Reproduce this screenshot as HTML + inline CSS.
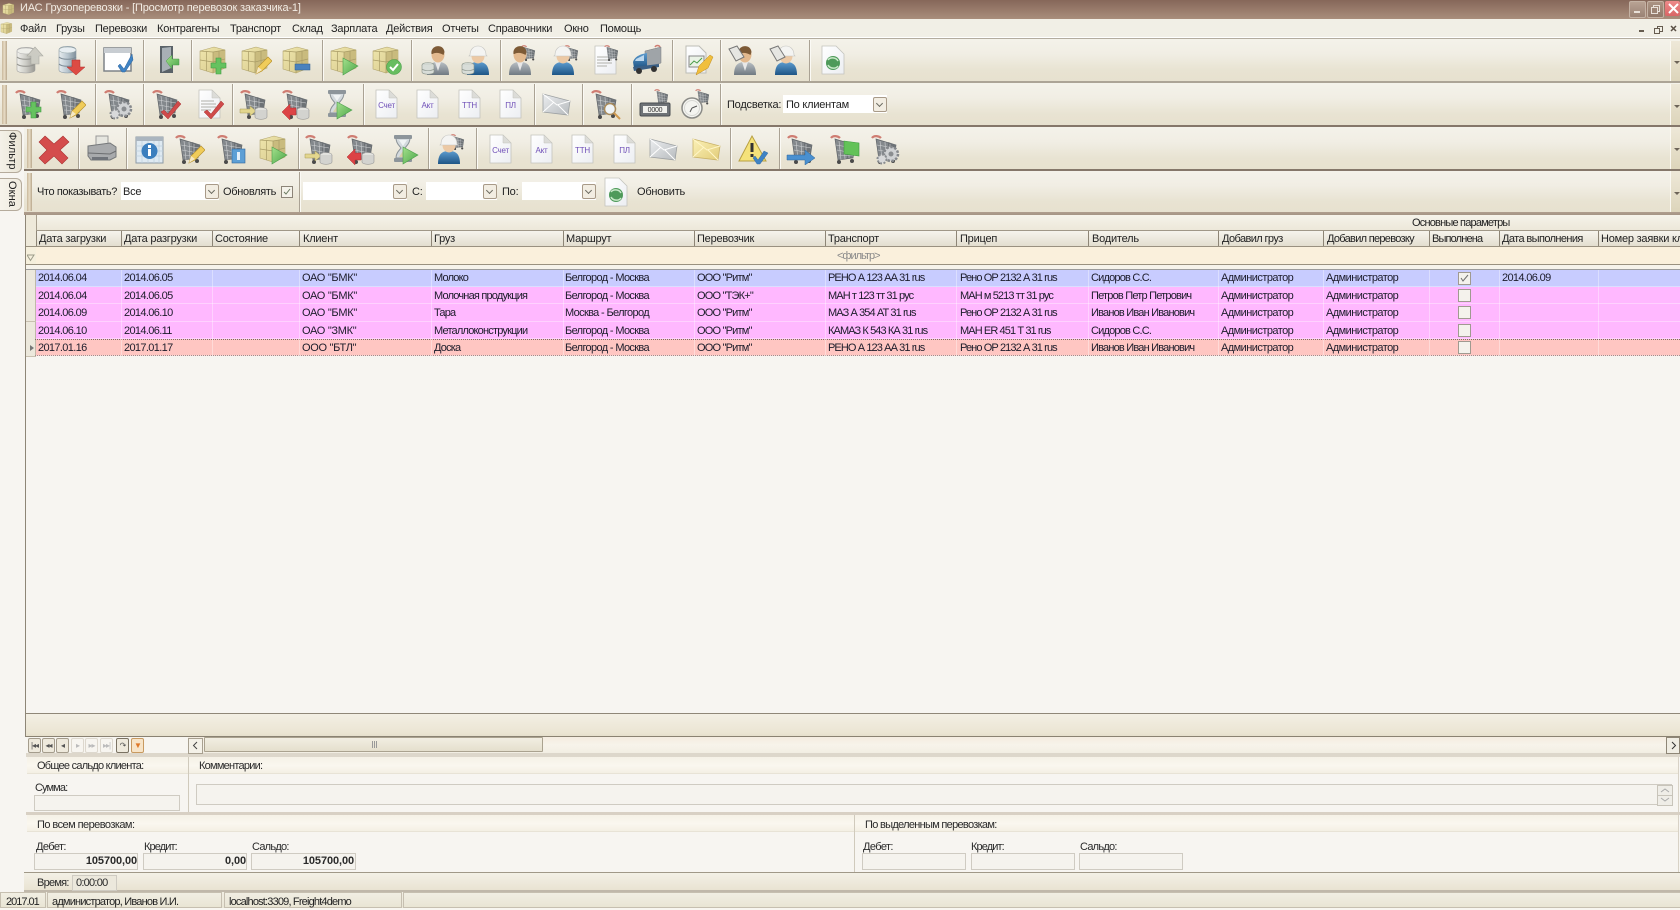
<!DOCTYPE html>
<html lang="ru"><head><meta charset="utf-8"><title>ИАС Грузоперевозки</title>
<style>
html,body{margin:0;padding:0;width:1680px;height:910px;overflow:hidden;background:#f7f5f1}
body{position:relative;font:11px "Liberation Sans","Noto Sans CJK SC",sans-serif;letter-spacing:-.22px;color:#222}
div,span,svg.i{position:absolute}
span{white-space:nowrap;line-height:14px;height:14px}
svg.i{width:32px;height:32px}
.a{top:44px}.b{top:88px}.c{top:133px}
.tb{left:0;width:1680px;background:linear-gradient(#f4f2ea,#f1eee4 35%,#e8e3d2 75%,#e7e1cf)}
.g{width:5px;left:2px;background:linear-gradient(90deg,#c9b89b,#e8dcc6 50%,#b8a78c);}
.s{width:1px;background:#aaa294;border-right:1px solid #fbfaf5}
.st{left:1670px;width:10px;border-left:1px solid #fbf9f2;background:linear-gradient(#eee8d8,#ddd5bb)}
.st:after{content:"";position:absolute;left:3px;top:50%;border:3px solid transparent;border-top:3px solid #6d6458}
.cb{background:#fff;height:18px}
.cb i{position:absolute;right:0;top:2px;width:12px;height:13px;background:#f2ede2;border:1px solid #a89a88;border-radius:2px}
.cb i:after{content:"";position:absolute;left:3px;top:3px;width:4px;height:4px;border:solid #6a6a60;border-width:0 1px 1px 0;transform:rotate(45deg)}
.h{top:231px;height:15px;background:linear-gradient(#f6f4ed,#e3decf);border-left:1px solid #8d8576}
.h span{top:1px}
.row{left:26px;width:1654px;height:17px;box-shadow:inset 0 -1px 0 rgba(255,255,255,.35)}
.row:before{content:"";position:absolute;left:0;top:0;width:9px;height:17px;background:#ece8dc;border-right:1px solid #c0b8a8;border-bottom:1px solid #c8c0b0}
.row span{top:1px;color:#1c1c2a}
.row+.row span{top:2px}
.c1{left:12px;letter-spacing:-.65px}.c2{left:98px;letter-spacing:-.65px}.c4{left:276px;letter-spacing:-.3px}.c5{left:408px;letter-spacing:-.8px}.c6{left:539px;letter-spacing:-.65px}.c7{left:671px;letter-spacing:-.8px}.c8{left:802px;letter-spacing:-.9px}.c9{left:934px;letter-spacing:-.9px}.c10{left:1065px;letter-spacing:-.8px}.c11{left:1195px;letter-spacing:-.55px}.c12{left:1300px;letter-spacing:-.55px}.c14{left:1476px;letter-spacing:-.65px}
.ck{left:1432px;top:2px;width:11px;height:11px;background:#f4f2ec;border:1px solid #a09a90}
.v{top:270px;height:86px;width:1px;background:rgba(255,255,255,.35)}
.f{background:#f5f3ee;border:1px solid #cfcbc2;box-sizing:border-box}
.hd{background:linear-gradient(#f5f1e6,#faf7ef 55%,#f4f0e4);}
.n{top:738px;width:11px;height:13px;background:#eee9dc;border:1px solid #a49c8c;border-radius:2px;color:#555;font-size:8px;line-height:13px;text-align:center;letter-spacing:-1px}
.n.o{background:#f7f5f0;border-color:#ddd8ce;color:#bbb}
.lb{letter-spacing:-.75px;color:#2a2a2a}
.bd{font-weight:bold;letter-spacing:-.1px;color:#2a2a2a}
.sb{top:892px;height:16px;background:linear-gradient(#f1eee3,#e9e5d4);border:1px solid #c6bfb0;box-sizing:border-box}
.sb span{top:2px;letter-spacing:-.8px}
.tab{left:0;width:21px;background:linear-gradient(90deg,#f4f1e8,#eae5d6);border:1px solid #b5ab9c;border-left:none;border-radius:0 6px 6px 0}
.vt{writing-mode:vertical-rl;line-height:16px;color:#222;letter-spacing:.1px}
</style></head><body>

<svg width="0" height="0" style="position:absolute"><defs>
<linearGradient id="gd" x1="0" x2="1" y1="0" y2="0"><stop offset="0" stop-color="#f2f2ef"/><stop offset=".5" stop-color="#c9c9c4"/><stop offset="1" stop-color="#8f8f8a"/></linearGradient>
<linearGradient id="gb" x1="0" x2="1" y1="0" y2="0"><stop offset="0" stop-color="#e8edf0"/><stop offset=".5" stop-color="#b9c6cf"/><stop offset="1" stop-color="#7f8f9b"/></linearGradient>
<linearGradient id="gt" x1="0" x2="1" y1="0" y2="1"><stop offset="0" stop-color="#efe6ad"/><stop offset="1" stop-color="#d6c88a"/></linearGradient>
<linearGradient id="gg" x1="0" x2="1" y1="0" y2="1"><stop offset="0" stop-color="#a4e08c"/><stop offset="1" stop-color="#4aa648"/></linearGradient>
<linearGradient id="gu" x1="0" x2="0" y1="0" y2="1"><stop offset="0" stop-color="#b9bfc4"/><stop offset="1" stop-color="#707a82"/></linearGradient>
<linearGradient id="gh" x1="0" x2="0" y1="0" y2="1"><stop offset="0" stop-color="#5d9ccf"/><stop offset="1" stop-color="#1e5586"/></linearGradient>
<linearGradient id="gp" x1="0" x2="1" y1="0" y2="1"><stop offset="0" stop-color="#ffffff"/><stop offset="1" stop-color="#eceef2"/></linearGradient>
<linearGradient id="gm" x1="0" x2="1" y1="0" y2="1"><stop offset="0" stop-color="#eceef0"/><stop offset="1" stop-color="#b6babd"/></linearGradient>
<linearGradient id="gy" x1="0" x2="1" y1="0" y2="1"><stop offset="0" stop-color="#fbf1b8"/><stop offset="1" stop-color="#e2cc78"/></linearGradient>

<symbol id="db" viewBox="0 0 32 32"><path d="M4 7c0-5 18-5 18 0v19c0 4-18 4-18 0z" fill="url(#gd)" stroke="#999" stroke-width=".6"/><path d="M4 13c3 3 15 3 18 0M4 20c3 3 15 3 18 0" fill="none" stroke="#8a8a86"/><ellipse cx="13" cy="7" rx="9" ry="3" fill="#eeeeea" stroke="#aaa" stroke-width=".5"/></symbol>
<symbol id="dbb" viewBox="0 0 32 32"><path d="M5 6c0-5 17-5 17 0v20c0 4-17 4-17 0z" fill="url(#gb)" stroke="#8a98a2" stroke-width=".6"/><path d="M5 13c3 3 14 3 17 0M5 20c3 3 14 3 17 0" fill="none" stroke="#7b8a95"/><ellipse cx="13.500" cy="6" rx="8.500" ry="3" fill="#e8eef2" stroke="#9aa" stroke-width=".5"/></symbol>
<symbol id="upa" viewBox="0 0 32 32"><path d="M22 3l8 9h-4v8h-8v-8h-4z" fill="#c8c8c0" stroke="#a5a59e" stroke-width=".6"/></symbol>
<symbol id="dna" viewBox="0 0 32 32"><path d="M18 16h8v7h5l-9 8-9-8h5z" fill="#dd4b44" stroke="#b02f2b" stroke-width=".5"/></symbol>
<symbol id="win" viewBox="0 0 32 32"><rect x="2" y="4" width="27" height="23" fill="#fff" stroke="#7e8388" stroke-width="1.500"/><rect x="2" y="4" width="27" height="5" fill="#c8cdd2"/><path d="M18 20l4 5 8-15 1 6-8 12h-3l-4-6z" fill="#3f83c4" stroke="#2a609a" stroke-width=".5"/></symbol>
<symbol id="door" viewBox="0 0 32 32"><path d="M8 2h13v27H8z" fill="#5a6268"/><path d="M10 4l9-1v21l-9 4z" fill="#a8b0b6"/><path d="M14 17l6-6v4h7v6h-7v4z" fill="url(#gg)" stroke="#4a9a4a" stroke-width=".5"/></symbol>
<symbol id="box" viewBox="0 0 32 32"><path d="M2 7l14-4 11 3v18l-12 5-13-4z" fill="url(#gt)" stroke="#b3a66f" stroke-width=".6"/><path d="M15 8l12-2v18l-12 5z" fill="#c9bb7e"/><path d="M2 7l13 1 12-2M2 16l13 2 12-3M8.500 7.500v19.500M15 8v21M21 7v20" stroke="#a99c66" stroke-width=".7" fill="none"/></symbol>
<symbol id="plus" viewBox="0 0 32 32"><path d="M18 14h5v5h5v5h-5v6h-5v-6h-5v-5h5z" fill="#66c25f" stroke="#3f9a42" stroke-width=".6"/></symbol>
<symbol id="pen" viewBox="0 0 32 32"><path d="M16 30l2-7 10-10 4 4-10 10z" fill="#f0cc5a" stroke="#b8922e" stroke-width=".7"/><path d="M16 30l2-7 4 3z" fill="#f5e8c4"/></symbol>
<symbol id="min" viewBox="0 0 32 32"><rect x="14" y="20" width="15" height="6" fill="#4a82bd" stroke="#2f5f90" stroke-width=".5"/></symbol>
<symbol id="play" viewBox="0 0 32 32"><path d="M14 14l15 8-15 9z" fill="url(#gg)" stroke="#4b9f4b" stroke-width=".6"/></symbol>
<symbol id="ok" viewBox="0 0 32 32"><circle cx="23" cy="23" r="7.500" fill="#67bd60" stroke="#3f9a42" stroke-width=".5"/><path d="M19 23l3 3 5-6" stroke="#fff" stroke-width="2" fill="none"/></symbol>
<symbol id="red" viewBox="0 0 32 32"><path d="M14 22l4 4 10-13 3 3-13 15-7-7z" fill="#cf4a4a" stroke="#a83232" stroke-width=".5"/></symbol>
<symbol id="u" viewBox="0 0 32 32"><path d="M6 31c0-11 5-13 11-13s11 2 11 13z" fill="url(#gu)"/><path d="M14 18l3 9 3-9z" fill="#e8e8e8"/><ellipse cx="17" cy="10.500" rx="6.500" ry="8" fill="#e3b98e"/><path d="M10.500 10c-1.500-9 12-11 13-2l-1 3c-3-2-8-3-11-1z" fill="#7d5a36"/></symbol>
<symbol id="uh" viewBox="0 0 32 32"><path d="M6 31c0-11 5-13 11-13s11 2 11 13z" fill="url(#gh)"/><ellipse cx="17" cy="12" rx="6.500" ry="7.500" fill="#ecc9a5"/><path d="M9 11c0-12 16-12 16 0l1 1H8z" fill="#f4f4f2" stroke="#c4c4c0" stroke-width=".6"/></symbol>
<symbol id="coin" viewBox="0 0 32 32"><ellipse cx="7" cy="21" rx="6" ry="2.500" fill="#d0d6d0" stroke="#8a938a" stroke-width=".6"/><path d="M1 21v7c0 3 12 3 12 0v-7" fill="#d8ddd8" stroke="#8a938a" stroke-width=".6"/><path d="M1 25c2 2 10 2 12 0" stroke="#8a938a" fill="none" stroke-width=".6"/></symbol>
<symbol id="cart" viewBox="0 0 32 32"><path d="M3 5c2-3 7-2 9 0" stroke="#cf7d72" stroke-width="2.200" fill="none"/><path d="M7 6l20 6-2 13-15 2z" fill="#83888c" stroke="#62666a" stroke-width=".7"/><path d="M19 9l8 3-2 13-6 1z" fill="#6d7276"/><path d="M11 8l2 19M16 9l1 17M21 11v14M8 12l18 3M9 17l16 3M10 22l15 1" stroke="#cfd1d3" stroke-width=".6" fill="none"/><circle cx="11" cy="29" r="2" fill="#4a4a4a"/><circle cx="24" cy="28" r="2" fill="#4a4a4a"/></symbol>
<symbol id="cartm" viewBox="0 0 32 32"><g transform="translate(14 0) scale(.55)"><use href="#cart" width="32" height="32"/></g></symbol>
<symbol id="gear" viewBox="0 0 32 32"><circle cx="22" cy="21" r="7" fill="#d0d2d4" stroke="#85888c" stroke-width="2.500" stroke-dasharray="2.500 1.500"/><circle cx="22" cy="21" r="2.500" fill="#8a8d90"/><circle cx="13" cy="26" r="4.500" fill="#d8d9da" stroke="#8a8d90" stroke-width="2" stroke-dasharray="2 1.500"/></symbol>
<symbol id="cdb" viewBox="0 0 32 32"><ellipse cx="23" cy="22" rx="6" ry="2.500" fill="#e2e2de" stroke="#888" stroke-width=".5"/><path d="M17 22v7c0 3 12 3 12 0v-7" fill="#d3d3cf" stroke="#888" stroke-width=".5"/></symbol>
<symbol id="cyl" viewBox="0 0 32 32"><path d="M2 21h10v-3l6 5-6 5v-3H2z" fill="#e3d68e" stroke="#a69a58" stroke-width=".5"/></symbol>
<symbol id="rarr" viewBox="0 0 32 32"><path d="M2 24l8-8v4h6v7h-6v5z" fill="#dc4345" stroke="#b02c2e" stroke-width=".5"/></symbol>
<symbol id="doc" viewBox="0 0 32 32"><path d="M6 2h13l8 8v20H6z" fill="url(#gp)" stroke="#c3c3bd" stroke-width=".8"/><path d="M19 2v8h8z" fill="#dcdcd8" stroke="#c3c3bd" stroke-width=".5"/></symbol>
<symbol id="lines" viewBox="0 0 32 32"><path d="M8 13h13M8 16h15M8 19h15M8 22h10" stroke="#b0b0aa"/></symbol>
<symbol id="glass" viewBox="0 0 32 32"><path d="M7 5h14c0 6-4 8-5 10 1 2 5 4 5 10H7c0-6 4-8 5-10-1-2-5-4-5-10z" fill="#d4dade" stroke="#8a9297"/><path d="M10 7h8l-4 6z" fill="#f0f3f4"/><path d="M14 18l4 6h-8z" fill="#d8cfa8"/><rect x="5" y="2" width="18" height="4" rx="1" fill="#8d959b"/><rect x="5" y="25" width="18" height="4" rx="1" fill="#8d959b"/></symbol>
<symbol id="mail" viewBox="0 0 32 32"><path d="M2 6l27 7-2 14L2 24z" fill="url(#gm)" stroke="#9ca0a2" stroke-width=".8"/><path d="M2 6l14 11 13-4M2 24l11-10M27 27L17 17" stroke="#fff" stroke-width="1" fill="none"/></symbol>
<symbol id="maily" viewBox="0 0 32 32"><path d="M3 6l27 7-2 14L3 24z" fill="url(#gy)" stroke="#c9b268" stroke-width=".8"/><path d="M3 6l14 11 13-4M3 24l11-10M28 27L18 17" stroke="#fff6c8" stroke-width="1" fill="none"/></symbol>
<symbol id="x" viewBox="0 0 32 32"><path d="M7 3l9 8 9-8 6 6-9 8 8 8-6 6-8-8-9 8-6-6 8-8-8-8z" fill="#d44c4c" stroke="#a93030" stroke-width=".6"/></symbol>
<symbol id="prn" viewBox="0 0 32 32"><path d="M11 3h12v10H11z" fill="#e6e6e0" stroke="#999"/><path d="M3 13l22-3 6 4v10l-6 3H6l-3-4z" fill="#a8aaac" stroke="#75787a"/><path d="M3 20l22 1 6-3" stroke="#6c6e70" fill="none"/><path d="M7 24h16v3H7z" fill="#70747a"/></symbol>
<symbol id="info" viewBox="0 0 32 32"><rect x="3" y="4" width="27" height="26" fill="#dfeaf2" stroke="#8d9aa5"/><rect x="3" y="4" width="27" height="4" fill="#aab5bf"/><path d="M3 13h27M3 18h27M3 23h27M9 8v22M15 8v22M21 8v22M26 8v22" stroke="#bdd0de" stroke-width=".7"/><circle cx="16.500" cy="18" r="8" fill="#3b7fbe"/><rect x="15" y="16" width="3" height="7" fill="#fff"/><rect x="15" y="12" width="3" height="3" fill="#fff"/></symbol>
<symbol id="warn" viewBox="0 0 32 32"><path d="M14 3l14 25H1z" fill="#f5e27a" stroke="#b8a042"/><rect x="12.500" y="10" width="3" height="9" fill="#333"/><rect x="12.500" y="21" width="3" height="3" fill="#333"/><path d="M17 23l3 4 6-9 4 2-8 11h-3l-4-6z" fill="#3f83c4" stroke="#295f95" stroke-width=".4"/></symbol>
<symbol id="blue" viewBox="0 0 32 32"><rect x="17" y="16" width="13" height="14" fill="#5d9fd5" stroke="#2f6599" stroke-width=".6"/><rect x="22" y="19" width="3" height="8" fill="#e5f0fa"/></symbol>
<symbol id="rep" viewBox="0 0 32 32"><path d="M4 2h13l7 7v20H4z" fill="url(#gp)" stroke="#bdbdb6"/><rect x="7" y="12" width="15" height="11" fill="#eaf2e6" stroke="#888"/><path d="M8 21l4-4 3 2 5-5" stroke="#4a9d4a" fill="none"/><path d="M14 31l3-9 11-11 3 2-5 11z" fill="#f0bf3e" stroke="#c08c22" stroke-width=".5"/></symbol>
<symbol id="truck" viewBox="0 0 32 32"><path d="M14 7l16-4v16l-16 5z" fill="#9fa4a8" stroke="#7a7e80" stroke-width=".5"/><path d="M24 3c1-2 4-2 5 0" stroke="#cf7d72" stroke-width="1.500" fill="none"/><path d="M2 18c2-6 8-8 14-9v15H3z" fill="url(#gh)"/><path d="M5 15l8-4v6H4z" fill="#bdd8ee"/><path d="M2 23l26-3v3L3 27z" fill="#3a5f85"/><circle cx="8" cy="27" r="3" fill="#333"/><circle cx="23" cy="25" r="3" fill="#333"/></symbol>
<symbol id="flag" viewBox="0 0 32 32"><path d="M16 8l15 2v13l-15-2z" fill="#63c258" stroke="#3f9a42" stroke-width=".6"/></symbol>
<symbol id="ar2" viewBox="0 0 32 32"><path d="M2 22h18v-5l10 8-10 7v-5H2z" fill="#4a90d0" stroke="#2f6599" stroke-width=".5"/></symbol>
<symbol id="cnt" viewBox="0 0 32 32"><rect x="1" y="15" width="30" height="13" rx="1.500" fill="#6e7276" stroke="#4a4e52"/><rect x="4" y="18" width="24" height="7" fill="#f0f0ec"/></symbol>
<symbol id="clk" viewBox="0 0 32 32"><circle cx="12" cy="20" r="10" fill="#f4f4f0" stroke="#8a8a86" stroke-width="1.500"/><circle cx="12" cy="20" r="7.500" fill="none" stroke="#d8d8d4"/><path d="M12 20l5-2M12 20l-2 4" stroke="#555"/></symbol>
<symbol id="mag" viewBox="0 0 32 32"><circle cx="21" cy="21" r="5.500" fill="#f0f4f6" stroke="#a88a5a" stroke-width="1.500"/><path d="M25 25l6 6" stroke="#d09a50" stroke-width="2"/></symbol>
<symbol id="grn" viewBox="0 0 32 32"><path d="M5 2h14l8 8v20H5z" fill="url(#gp)" stroke="#c3c3bd" stroke-width=".8"/><circle cx="16" cy="19" r="7" fill="#4e9a5a"/><path d="M11 16c2-3 8-3 10 1M21 22c-2 3-8 3-10-1" stroke="#c8e8c8" stroke-width="1.500" fill="none"/></symbol>
<symbol id="ud" viewBox="0 0 32 32"><path d="M1 5l8-3 7 11-8 4z" fill="#e6e6e2" stroke="#777"/></symbol>
</defs></svg>

<!-- title -->
<div style="left:0;top:0;width:1680px;height:19px;background:linear-gradient(#866759,#a98e7c)"></div>
<svg class="i" style="left:2px;top:2px;width:14px;height:14px" viewBox="0 0 32 32"><use href="#box"/></svg>
<span style="left:20px;top:1px;color:#f2ece4;font-size:11px;letter-spacing:-.17px">ИАС Грузоперевозки - [Просмотр перевозок заказчика-1]</span>
<div style="left:1629px;top:1px;width:15px;height:15px;background:linear-gradient(#b8a293,#9a8274);border:1px solid #c4b2a4;border-radius:2px"></div>
<div style="left:1634px;top:11px;width:6px;height:2px;background:#e8e0d8"></div>
<div style="left:1647px;top:1px;width:15px;height:15px;background:linear-gradient(#ab9484,#917869);border:1px solid #c4b2a4;border-radius:2px"></div>
<div style="left:1653px;top:5px;width:5px;height:5px;border:1px solid #e8e0d8"></div>
<div style="left:1651px;top:7px;width:5px;height:5px;border:1px solid #e8e0d8;background:#9c8475"></div>
<div style="left:1665px;top:1px;width:15px;height:15px;background:linear-gradient(#ee8a8a,#d96565);border-radius:2px"></div>
<svg style="position:absolute;left:1668px;top:3px" width="12" height="12"><path d="M1 1l9 9M10 1l-9 9" stroke="#fff" stroke-width="2"/></svg>

<!-- menu -->
<div style="left:0;top:19px;width:1680px;height:18px;background:#f1efe6"></div>
<div style="left:0;top:37px;width:1680px;height:2px;background:#fff"></div>
<div style="left:0;top:38px;width:1680px;height:1px;background:#b3ac9f"></div>
<svg class="i" style="left:0;top:21px;width:14px;height:14px" viewBox="0 0 32 32"><use href="#box"/></svg>
<span style="left:20px;top:22px">Файл</span><span style="left:56px;top:22px">Грузы</span><span style="left:95px;top:22px">Перевозки</span><span style="left:157px;top:22px">Контрагенты</span><span style="left:230px;top:22px">Транспорт</span><span style="left:292px;top:22px">Склад</span><span style="left:331px;top:22px">Зарплата</span><span style="left:386px;top:22px">Действия</span><span style="left:442px;top:22px">Отчеты</span><span style="left:488px;top:22px">Справочники</span><span style="left:564px;top:22px">Окно</span><span style="left:600px;top:22px">Помощь</span>
<div style="left:1639px;top:30px;width:5px;height:2px;background:#665c50"></div>
<div style="left:1657px;top:26px;width:4px;height:4px;border:1px solid #665c50"></div><div style="left:1654px;top:28px;width:4px;height:4px;border:1px solid #665c50;background:#f1efe6"></div>
<svg style="position:absolute;left:1670px;top:25px" width="8" height="8"><path d="M1 1l5 5M6 1L1 6" stroke="#5a5046" stroke-width="1.500"/></svg>

<!-- toolbars -->
<div class="tb" style="top:39px;height:42px"></div>
<div style="left:0;top:81px;width:1680px;height:2px;background:#aca496"></div>
<div class="tb" style="top:83px;height:42px"></div>
<div style="left:0;top:125px;width:1680px;height:2px;background:#85776a"></div>
<div class="tb" style="left:24px;width:1656px;top:127px;height:42px"></div>
<div style="left:24px;top:169px;width:1656px;height:2px;background:#85776a"></div>
<div class="tb" style="left:24px;width:1656px;top:171px;height:41px"></div>
<div style="left:24px;top:212px;width:1656px;height:3px;background:linear-gradient(#b09e8e,#a59484)"></div>
<div class="g" style="top:41px;height:39px"></div><div class="g" style="top:85px;height:39px"></div>
<div class="g" style="left:27px;top:129px;height:39px"></div><div class="g" style="left:27px;top:173px;height:38px"></div>
<div class="st" style="top:41px;height:40px"></div><div class="st" style="top:84px;height:41px"></div><div class="st" style="top:127px;height:42px"></div><div class="st" style="top:171px;height:41px"></div>

<!-- seps T1 -->
<div class="s" style="left:95px;top:40px;height:41px"></div><div class="s" style="left:143px;top:40px;height:41px"></div><div class="s" style="left:191px;top:40px;height:41px"></div><div class="s" style="left:322px;top:40px;height:41px"></div><div class="s" style="left:411px;top:40px;height:41px"></div><div class="s" style="left:500px;top:40px;height:41px"></div><div class="s" style="left:672px;top:40px;height:41px"></div><div class="s" style="left:720px;top:40px;height:41px"></div><div class="s" style="left:809px;top:40px;height:41px"></div>
<!-- seps T2 -->
<div class="s" style="left:95px;top:84px;height:41px"></div><div class="s" style="left:143px;top:84px;height:41px"></div><div class="s" style="left:232px;top:84px;height:41px"></div><div class="s" style="left:363px;top:84px;height:41px"></div><div class="s" style="left:534px;top:84px;height:41px"></div><div class="s" style="left:582px;top:84px;height:41px"></div><div class="s" style="left:631px;top:84px;height:41px"></div><div class="s" style="left:720px;top:84px;height:41px"></div>
<!-- seps T3 -->
<div class="s" style="left:78px;top:128px;height:41px"></div><div class="s" style="left:126px;top:128px;height:41px"></div><div class="s" style="left:298px;top:128px;height:41px"></div><div class="s" style="left:428px;top:128px;height:41px"></div><div class="s" style="left:476px;top:128px;height:41px"></div><div class="s" style="left:730px;top:128px;height:41px"></div><div class="s" style="left:779px;top:128px;height:41px"></div>
<div class="s" style="left:299px;top:172px;height:40px"></div>

<!-- T1 icons -->
<svg class="i a" style="left:13px" viewBox="0 0 32 32" opacity=".9"><use href="#db"/><use href="#upa"/></svg>
<svg class="i a" style="left:54px" viewBox="0 0 32 32"><use href="#dbb"/><use href="#dna"/></svg>
<svg class="i a" style="left:102px" viewBox="0 0 32 32"><use href="#win"/></svg>
<svg class="i a" style="left:152px" viewBox="0 0 32 32"><use href="#door"/></svg>
<svg class="i a" style="left:198px" viewBox="0 0 32 32"><use href="#box"/><use href="#plus"/></svg>
<svg class="i a" style="left:240px" viewBox="0 0 32 32"><use href="#box"/><use href="#pen"/></svg>
<svg class="i a" style="left:281px" viewBox="0 0 32 32"><use href="#box"/><use href="#min"/></svg>
<svg class="i a" style="left:329px" viewBox="0 0 32 32"><use href="#box"/><use href="#play"/></svg>
<svg class="i a" style="left:371px" viewBox="0 0 32 32"><use href="#box"/><use href="#ok"/></svg>
<svg class="i a" style="left:421px" viewBox="0 0 32 32"><use href="#u"/><use href="#coin"/></svg>
<svg class="i a" style="left:461px" viewBox="0 0 32 32"><use href="#uh"/><use href="#coin"/></svg>
<svg class="i a" style="left:506px" viewBox="0 0 32 32"><use href="#cartm"/><g transform="translate(-3 0)"><use href="#u"/></g></svg>
<svg class="i a" style="left:549px" viewBox="0 0 32 32"><use href="#cartm"/><g transform="translate(-3 0)"><use href="#uh"/></g></svg>
<svg class="i a" style="left:589px" viewBox="0 0 32 32"><use href="#doc"/><use href="#lines"/><use href="#cartm"/></svg>
<svg class="i a" style="left:631px" viewBox="0 0 32 32"><use href="#truck"/></svg>
<svg class="i a" style="left:682px" viewBox="0 0 32 32"><use href="#rep"/></svg>
<svg class="i a" style="left:728px" viewBox="0 0 32 32"><use href="#u"/><use href="#ud"/></svg>
<svg class="i a" style="left:769px" viewBox="0 0 32 32"><use href="#uh"/><use href="#ud"/></svg>
<svg class="i a" style="left:817px" viewBox="0 0 32 32"><use href="#grn"/></svg>

<!-- T2 icons -->
<svg class="i b" style="left:13px" viewBox="0 0 32 32"><use href="#cart"/><use href="#plus"/></svg>
<svg class="i b" style="left:54px" viewBox="0 0 32 32"><use href="#cart"/><use href="#pen"/></svg>
<svg class="i b" style="left:102px" viewBox="0 0 32 32"><use href="#cart"/><use href="#gear"/></svg>
<svg class="i b" style="left:150px" viewBox="0 0 32 32"><use href="#cart"/><use href="#red"/></svg>
<svg class="i b" style="left:193px" viewBox="0 0 32 32"><use href="#doc"/><use href="#lines"/><use href="#red"/></svg>
<svg class="i b" style="left:238px" viewBox="0 0 32 32"><use href="#cart"/><use href="#cyl"/><use href="#cdb"/></svg>
<svg class="i b" style="left:280px" viewBox="0 0 32 32"><use href="#cart"/><use href="#rarr"/><use href="#cdb"/></svg>
<svg class="i b" style="left:323px" viewBox="0 0 32 32"><use href="#glass"/><use href="#play"/></svg>
<svg class="i b" style="left:370px" viewBox="0 0 32 32"><use href="#doc"/><text x="16.500" y="20" font-size="8" text-anchor="middle" fill="#7050b8" font-family="Liberation Sans">Счет</text></svg>
<svg class="i b" style="left:411px" viewBox="0 0 32 32"><use href="#doc"/><text x="16.500" y="20" font-size="8" text-anchor="middle" fill="#7050b8" font-family="Liberation Sans">Акт</text></svg>
<svg class="i b" style="left:453px" viewBox="0 0 32 32"><use href="#doc"/><text x="16.500" y="20" font-size="8" text-anchor="middle" fill="#7050b8" font-family="Liberation Sans">ТТН</text></svg>
<svg class="i b" style="left:494px" viewBox="0 0 32 32"><use href="#doc"/><text x="16.500" y="20" font-size="8" text-anchor="middle" fill="#7050b8" font-family="Liberation Sans">ПЛ</text></svg>
<svg class="i b" style="left:541px" viewBox="0 0 32 32"><use href="#mail"/></svg>
<svg class="i b" style="left:589px" viewBox="0 0 32 32"><use href="#cart"/><use href="#mag"/></svg>
<svg class="i b" style="left:639px" viewBox="0 0 32 32"><use href="#cartm"/><use href="#cnt"/><text x="16" y="24" font-size="7" text-anchor="middle" fill="#333" font-family="Liberation Sans">0000</text></svg>
<svg class="i b" style="left:680px" viewBox="0 0 32 32"><use href="#cartm"/><use href="#clk"/></svg>
<span style="left:727px;top:98px">Подсветка:</span>
<div class="cb" style="left:783px;top:95px;width:104px"><i></i></div><span style="left:786px;top:98px">По клиентам</span>

<!-- T3 icons -->
<svg class="i c" style="left:38px" viewBox="0 0 32 32"><use href="#x"/></svg>
<svg class="i c" style="left:85px" viewBox="0 0 32 32"><use href="#prn"/></svg>
<svg class="i c" style="left:133px" viewBox="0 0 32 32"><use href="#info"/></svg>
<svg class="i c" style="left:173px" viewBox="0 0 32 32"><use href="#cart"/><use href="#pen"/></svg>
<svg class="i c" style="left:215px" viewBox="0 0 32 32"><use href="#cart"/><use href="#blue"/></svg>
<svg class="i c" style="left:258px" viewBox="0 0 32 32"><use href="#box"/><use href="#play"/></svg>
<svg class="i c" style="left:303px" viewBox="0 0 32 32"><use href="#cart"/><use href="#cyl"/><use href="#cdb"/></svg>
<svg class="i c" style="left:345px" viewBox="0 0 32 32"><use href="#cart"/><use href="#rarr"/><use href="#cdb"/></svg>
<svg class="i c" style="left:389px" viewBox="0 0 32 32"><use href="#glass"/><use href="#play"/></svg>
<svg class="i c" style="left:435px" viewBox="0 0 32 32"><use href="#cartm"/><g transform="translate(-3 0)"><use href="#uh"/></g></svg>
<svg class="i c" style="left:484px" viewBox="0 0 32 32"><use href="#doc"/><text x="16.500" y="20" font-size="8" text-anchor="middle" fill="#7050b8" font-family="Liberation Sans">Счет</text></svg>
<svg class="i c" style="left:525px" viewBox="0 0 32 32"><use href="#doc"/><text x="16.500" y="20" font-size="8" text-anchor="middle" fill="#7050b8" font-family="Liberation Sans">Акт</text></svg>
<svg class="i c" style="left:566px" viewBox="0 0 32 32"><use href="#doc"/><text x="16.500" y="20" font-size="8" text-anchor="middle" fill="#7050b8" font-family="Liberation Sans">ТТН</text></svg>
<svg class="i c" style="left:608px" viewBox="0 0 32 32"><use href="#doc"/><text x="16.500" y="20" font-size="8" text-anchor="middle" fill="#7050b8" font-family="Liberation Sans">ПЛ</text></svg>
<svg class="i c" style="left:648px" viewBox="0 0 32 32"><use href="#mail"/></svg>
<svg class="i c" style="left:690px" viewBox="0 0 32 32"><use href="#maily"/></svg>
<svg class="i c" style="left:738px" viewBox="0 0 32 32"><use href="#warn"/></svg>
<svg class="i c" style="left:785px" viewBox="0 0 32 32"><use href="#cart"/><use href="#ar2"/></svg>
<svg class="i c" style="left:828px" viewBox="0 0 32 32"><use href="#cart"/><use href="#flag"/></svg>
<svg class="i c" style="left:869px" viewBox="0 0 32 32"><use href="#cart"/><use href="#gear"/></svg>

<!-- T4 -->
<span style="left:37px;top:185px;letter-spacing:-.4px">Что показывать?</span>
<div class="cb" style="left:121px;top:182px;width:98px"><i></i></div><span style="left:123px;top:185px">Все</span>
<span style="left:223px;top:185px;letter-spacing:-.3px">Обновлять</span>
<div style="left:281px;top:186px;width:10px;height:10px;border:1px solid #8c8478;background:#f4f2ea"></div>
<svg style="position:absolute;left:282px;top:187px" width="10" height="10"><path d="M2 5l2 2 4-5" stroke="#6a7a60" fill="none"/></svg>
<div class="cb" style="left:303px;top:182px;width:104px"><i></i></div>
<span style="left:412px;top:185px">С:</span>
<div class="cb" style="left:426px;top:182px;width:71px"><i></i></div>
<span style="left:502px;top:185px">По:</span>
<div class="cb" style="left:522px;top:182px;width:74px"><i></i></div>
<svg class="i" style="left:600px;top:176px" viewBox="0 0 32 32"><use href="#grn"/></svg>
<span style="left:637px;top:185px">Обновить</span>

<!-- left tabs -->
<div class="tab" style="top:130px;height:41px"></div>
<div class="tab" style="top:178px;height:31px;background:linear-gradient(90deg,#f6f3eb,#f0ebdf)"></div>
<span class="vt" style="left:4px;top:132px;width:16px;height:38px">Фильтр</span>
<span class="vt" style="left:4px;top:181px;width:16px;height:26px">Окна</span>

<!-- grid -->
<div style="left:25px;top:215px;width:1px;height:522px;background:#8e8677"></div>
<div style="left:26px;top:215px;width:1654px;height:16px;background:linear-gradient(#f6f3ea,#ece7d8)"></div>
<div style="left:26px;top:215px;width:10px;height:53px;background:#eee9da;border-right:1px solid #a89f8e"></div>
<span style="left:1412px;top:216px;letter-spacing:-.8px">Основные параметры</span>
<div style="left:36px;top:230px;width:1644px;height:1px;background:#a09888"></div>
<div class="h" style="left:36px;width:85px"><span style="left:2px">Дата загрузки</span></div>
<div class="h" style="left:121px;width:91px"><span style="left:2px">Дата разгрузки</span></div>
<div class="h" style="left:212px;width:87px"><span style="left:2px">Состояние</span></div>
<div class="h" style="left:299px;width:132px"><span style="left:3px">Клиент</span></div>
<div class="h" style="left:431px;width:132px"><span style="left:2px">Груз</span></div>
<div class="h" style="left:563px;width:131px"><span style="left:2px">Маршрут</span></div>
<div class="h" style="left:694px;width:131px"><span style="left:2px">Перевозчик</span></div>
<div class="h" style="left:825px;width:131px"><span style="left:2px">Транспорт</span></div>
<div class="h" style="left:956px;width:132px"><span style="left:3px">Прицеп</span></div>
<div class="h" style="left:1088px;width:130px"><span style="left:3px">Водитель</span></div>
<div class="h" style="left:1218px;width:105px"><span style="left:3px;letter-spacing:-.6px">Добавил груз</span></div>
<div class="h" style="left:1323px;width:106px"><span style="left:3px;letter-spacing:-.7px">Добавил перевозку</span></div>
<div class="h" style="left:1429px;width:70px"><span style="left:2px;letter-spacing:-.85px">Выполнена</span></div>
<div class="h" style="left:1499px;width:99px"><span style="left:2px;letter-spacing:-.6px">Дата выполнения</span></div>
<div class="h" style="left:1598px;width:82px;overflow:hidden"><span style="left:2px">Номер заявки кл</span></div>
<div style="left:26px;top:246px;width:1654px;height:1px;background:#9a9180"></div>
<div style="left:36px;top:247px;width:1644px;height:17px;background:#faf0dc"></div>
<div style="left:26px;top:247px;width:10px;height:17px;background:#f5efdc"></div>
<svg style="position:absolute;left:27px;top:254px" width="8" height="8"><path d="M0 1h7L3.500 6.500z" fill="none" stroke="#9a9a88"/></svg>
<span style="left:837px;top:249px;color:#8a8a8a;letter-spacing:-1px">&lt;фильтр&gt;</span>
<div style="left:26px;top:264px;width:1654px;height:1px;background:#9a9180"></div>
<div style="left:26px;top:265px;width:1654px;height:4px;background:#f6f3eb"></div>
<div style="left:26px;top:269px;width:1654px;height:1px;background:#9c9c9c"></div>

<div class="row" style="top:270px;background:#c8ccff"><span class="c1">2014.06.04</span><span class="c2">2014.06.05</span><span class="c4">ОАО "БМК"</span><span class="c5">Молоко</span><span class="c6">Белгород - Москва</span><span class="c7">ООО "Ритм"</span><span class="c8">РЕНО А 123 АА 31 rus</span><span class="c9">Рено ОР 2132 А 31 rus</span><span class="c10">Сидоров С.С.</span><span class="c11">Администратор</span><span class="c12">Администратор</span><i class="ck" style="position:absolute"></i><svg style="position:absolute;left:1433px;top:3px" width="11" height="11"><path d="M2 5l2 3 5-6" stroke="#707070" fill="none"/></svg><span class="c14">2014.06.09</span></div>
<div class="row" style="top:287px;background:#ffb8ff"><span class="c1">2014.06.04</span><span class="c2">2014.06.05</span><span class="c4">ОАО "БМК"</span><span class="c5">Молочная продукция</span><span class="c6">Белгород - Москва</span><span class="c7">ООО "ТЭК+"</span><span class="c8">МАН т 123 тт 31 рус</span><span class="c9">МАН м 5213 тт 31 рус</span><span class="c10">Петров Петр Петрович</span><span class="c11">Администратор</span><span class="c12">Администратор</span><i class="ck" style="position:absolute"></i></div>
<div class="row" style="top:304px;height:18px;background:#ffb8ff"><span class="c1">2014.06.09</span><span class="c2">2014.06.10</span><span class="c4">ОАО "БМК"</span><span class="c5">Тара</span><span class="c6">Москва - Белгород</span><span class="c7">ООО "Ритм"</span><span class="c8">МАЗ А 354 АТ 31 rus</span><span class="c9">Рено ОР 2132 А 31 rus</span><span class="c10">Иванов Иван Иванович</span><span class="c11">Администратор</span><span class="c12">Администратор</span><i class="ck" style="position:absolute"></i></div>
<div class="row" style="top:322px;background:#ffb8ff"><span class="c1">2014.06.10</span><span class="c2">2014.06.11</span><span class="c4">ОАО "ЗМК"</span><span class="c5">Металлоконструкции</span><span class="c6">Белгород - Москва</span><span class="c7">ООО "Ритм"</span><span class="c8">КАМАЗ К 543 КА 31 rus</span><span class="c9">МАН ER 451 Т 31 rus</span><span class="c10">Сидоров С.С.</span><span class="c11">Администратор</span><span class="c12">Администратор</span><i class="ck" style="position:absolute"></i></div>
<div class="row" style="top:339px;background:#ffc6c2"><span class="c1">2017.01.16</span><span class="c2">2017.01.17</span><span class="c4">ООО "БТЛ"</span><span class="c5">Доска</span><span class="c6">Белгород - Москва</span><span class="c7">ООО "Ритм"</span><span class="c8">РЕНО А 123 АА 31 rus</span><span class="c9">Рено ОР 2132 А 31 rus</span><span class="c10">Иванов Иван Иванович</span><span class="c11">Администратор</span><span class="c12">Администратор</span><i class="ck" style="position:absolute"></i></div>
<div style="left:35px;top:339px;width:1645px;height:0;border-top:1px dotted #7a6a6a"></div>
<div style="left:35px;top:355px;width:1645px;height:0;border-top:1px dotted #a08f8f"></div>
<svg style="position:absolute;left:29px;top:344px" width="6" height="8"><path d="M1 1l4 3-4 3z" fill="#777"/></svg>
<div class="v" style="left:121px"></div><div class="v" style="left:212px"></div><div class="v" style="left:299px"></div><div class="v" style="left:431px"></div><div class="v" style="left:563px"></div><div class="v" style="left:694px"></div><div class="v" style="left:825px"></div><div class="v" style="left:956px"></div><div class="v" style="left:1088px"></div><div class="v" style="left:1218px"></div><div class="v" style="left:1323px"></div><div class="v" style="left:1429px"></div><div class="v" style="left:1499px"></div><div class="v" style="left:1598px"></div>

<!-- grid footer -->
<div style="left:26px;top:713px;width:1654px;height:1px;background:#8f8778"></div>
<div style="left:26px;top:714px;width:1654px;height:22px;background:linear-gradient(#f3efe4,#ebe5d3 85%,#e6dfcc)"></div>
<div style="left:26px;top:736px;width:1654px;height:1px;background:#8a8272"></div>
<div style="left:26px;top:737px;width:1654px;height:16px;background:linear-gradient(#f4ece0,#f7f3ea 50%,#f2eee3)"></div>
<div style="left:26px;top:737px;width:162px;height:16px;background:#f7f5f0"></div>
<div style="left:26px;top:753px;width:1654px;height:4px;background:#ddd7cb"></div>
<div class="n" style="left:28px">|◂◂</div><div class="n" style="left:42px">◂◂</div><div class="n" style="left:56px">◂</div><div class="n o" style="left:71px">▸</div><div class="n o" style="left:85px">▸▸</div><div class="n o" style="left:100px">▸▸|</div><div class="n" style="left:116px;border-color:#7a7262">↷</div><div class="n" style="left:131px;background:#f7e4c8;border-color:#c89a60;color:#e07828">▼</div>
<div style="left:188px;top:738px;width:13px;height:14px;background:#f4f1e8;border:1px solid #a8a090"></div>
<svg style="position:absolute;left:192px;top:741px" width="7" height="9"><path d="M5 1L1.500 4.500 5 8" fill="none" stroke="#444"/></svg>
<div style="left:204px;top:737px;width:339px;height:15px;background:linear-gradient(#f2eee2,#e5dfcd);border:1px solid #aaa28f;box-sizing:border-box;border-radius:1px"></div>
<div style="left:372px;top:741px;width:1px;height:7px;background:#999;box-shadow:2px 0 0 #999,4px 0 0 #999"></div>
<div style="left:1666px;top:737px;width:12px;height:15px;background:#f0ede3;border:1px solid #8e8676"></div>
<svg style="position:absolute;left:1670px;top:741px" width="7" height="9"><path d="M2 1l3.500 3.500L2 8" fill="none" stroke="#333"/></svg>

<!-- panel 1 -->
<div style="left:27px;top:757px;width:1651px;height:55px;background:#f7f5f1;border-right:1px solid #d8d2c6"></div>
<div class="hd" style="left:27px;top:757px;width:161px;height:16px;border-bottom:1px solid #e8e3d6"></div>
<div class="hd" style="left:189px;top:757px;width:1489px;height:16px;border-bottom:1px solid #e8e3d6"></div>
<div style="left:188px;top:757px;width:1px;height:55px;background:#d0cabc"></div>
<span class="lb" style="left:37px;top:759px">Общее сальдо клиента:</span>
<span class="lb" style="left:199px;top:759px">Комментарии:</span>
<span class="lb" style="left:35px;top:781px;letter-spacing:-.9px">Сумма:</span>
<div class="f" style="left:34px;top:795px;width:146px;height:16px"></div>
<div class="f" style="left:196px;top:784px;width:1476px;height:21px"></div>
<div style="left:1657px;top:785px;width:14px;height:9px;background:#efede7;border:1px solid #c8c4ba"></div><div style="left:1657px;top:795px;width:14px;height:9px;background:#efede7;border:1px solid #c8c4ba"></div>
<svg style="position:absolute;left:1660px;top:787px" width="10" height="18"><path d="M1 5l4-3 4 3M1 11l4 3 4-3" fill="none" stroke="#aaa"/></svg>
<div style="left:26px;top:812px;width:1654px;height:3px;background:#d8d0c4"></div>

<!-- panel 2 -->
<div style="left:27px;top:815px;width:1651px;height:57px;background:#f7f5f1;border-right:1px solid #d8d2c6"></div>
<div class="hd" style="left:27px;top:815px;width:827px;height:16px;border-bottom:1px solid #e8e3d6"></div>
<div class="hd" style="left:855px;top:815px;width:823px;height:16px;border-bottom:1px solid #e8e3d6"></div>
<div style="left:854px;top:815px;width:1px;height:57px;background:#d0cabc"></div>
<span class="lb" style="left:37px;top:818px;letter-spacing:-.55px">По всем перевозкам:</span>
<span class="lb" style="left:865px;top:818px;letter-spacing:-.7px">По выделенным перевозкам:</span>
<span class="lb" style="left:36px;top:840px;letter-spacing:-.6px">Дебет:</span><span class="lb" style="left:144px;top:840px;letter-spacing:-.9px">Кредит:</span><span class="lb" style="left:252px;top:840px">Сальдо:</span>
<span class="lb" style="left:863px;top:840px;letter-spacing:-.6px">Дебет:</span><span class="lb" style="left:971px;top:840px;letter-spacing:-.9px">Кредит:</span><span class="lb" style="left:1080px;top:840px">Сальдо:</span>
<div class="f" style="left:34px;top:853px;width:104px;height:17px"></div><div class="f" style="left:143px;top:853px;width:104px;height:17px"></div><div class="f" style="left:251px;top:853px;width:105px;height:17px"></div>
<span class="bd" style="right:1543px;top:854px">105700,00</span><span class="bd" style="right:1434px;top:854px">0,00</span><span class="bd" style="right:1326px;top:854px">105700,00</span>
<div class="f" style="left:862px;top:853px;width:104px;height:17px"></div><div class="f" style="left:971px;top:853px;width:104px;height:17px"></div><div class="f" style="left:1079px;top:853px;width:104px;height:17px"></div>

<!-- time -->
<div style="left:24px;top:872px;width:1656px;height:1px;background:#a09888"></div>
<div style="left:24px;top:873px;width:1656px;height:17px;background:linear-gradient(#f3f0e6,#e9e3d2)"></div>
<div style="left:24px;top:890px;width:1656px;height:2px;background:#c0b8aa"></div>
<span class="lb" style="left:37px;top:876px">Время:</span>
<div class="f" style="left:72px;top:875px;width:45px;height:16px;background:#ece8dc"></div><span class="lb" style="left:76px;top:876px">0:00:00</span>

<!-- status -->
<div style="left:0;top:892px;width:1680px;height:17px;background:linear-gradient(#f1eee3,#e9e5d4)"></div>
<div style="left:0;top:908px;width:1680px;height:2px;background:#f8f6f0"></div>
<div class="sb" style="left:0;width:46px"><span style="left:5px;letter-spacing:-1px">2017.01</span></div>
<div class="sb" style="left:47px;width:175px"><span style="left:4px">администратор, Иванов И.И.</span></div>
<div class="sb" style="left:224px;width:178px"><span style="left:4px;letter-spacing:-.82px">localhost:3309, Freight4demo</span></div>
<div class="sb" style="left:403px;width:1277px;border-right:none"></div>
</body></html>
